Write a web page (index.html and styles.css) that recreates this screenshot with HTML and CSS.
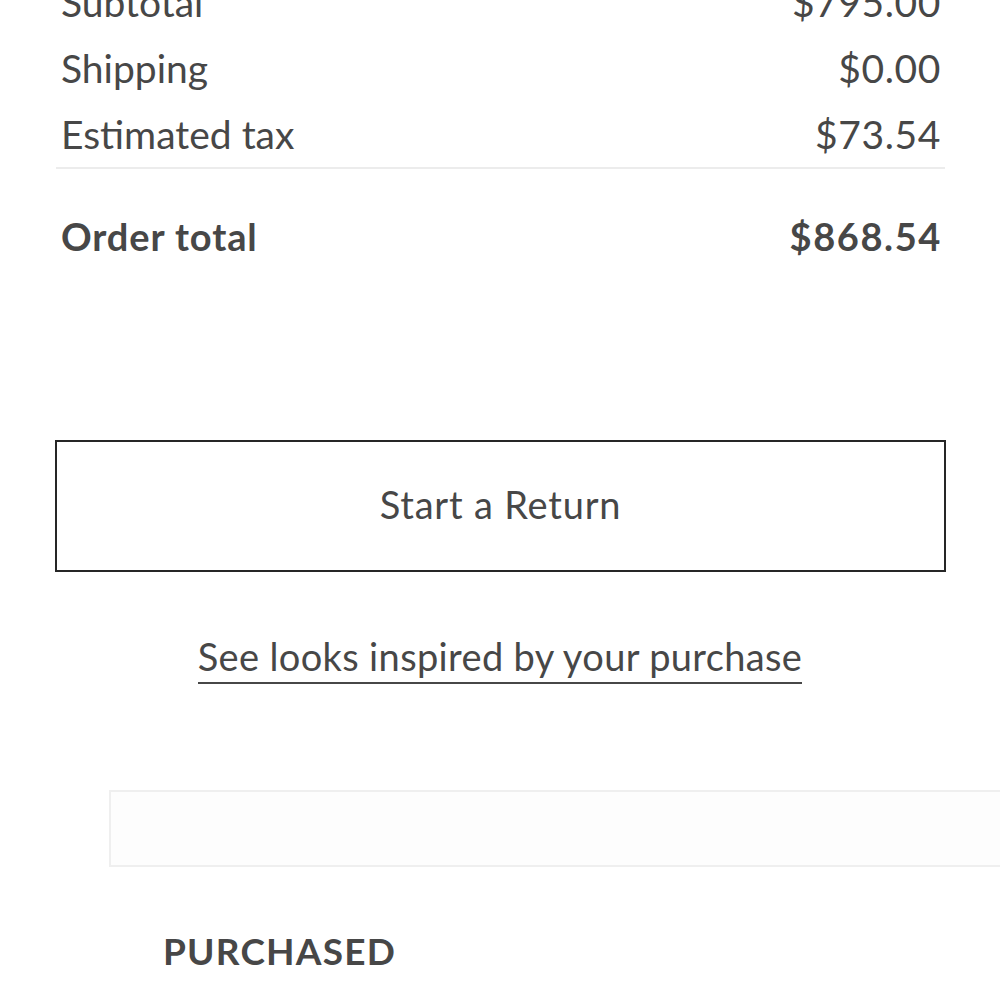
FILE: index.html
```html
<!DOCTYPE html>
<html lang="en">
<head>
<meta charset="utf-8">
<title>Order summary</title>
<link rel="stylesheet" href="styles.css">
</head>
<body>
<main class="page">
  <section class="summary">
    <div class="row"><span>Subtotal</span><span class="amt">$795.00</span></div>
    <div class="row"><span>Shipping</span><span class="amt">$0.00</span></div>
    <div class="row"><span>Estimated tax</span><span class="amt">$73.54</span></div>
    <div class="row total"><span>Order total</span><span class="amt">$868.54</span></div>
  </section>
  <button class="return-btn" type="button">Start a Return</button>
  <div class="looks"><a class="looks-link" href="#">See looks inspired by your purchase</a></div>
  <div class="panel"></div>
  <h2 class="purchased">PURCHASED</h2>
</main>
</body>
</html>
```
FILE: styles.css
```css
html, body {
  margin: 0;
  padding: 0;
  background: #ffffff;
}
body {
  font-family: Lato, "Open Sans", sans-serif;
  color: #474747;
  overflow: hidden;
}
.page {
  width: 1000px;
  margin-top: -31px;
}
.summary {
  margin-left: 56px;
  width: 889px;
}
.row {
  display: flex;
  justify-content: space-between;
  height: 66px;
  line-height: 66px;
  font-size: 39px;
  padding: 0 5px;
}
.amt {
  letter-spacing: 0.6px;
  margin-right: -1px;
}
.row.total {
  border-top: 2px solid #ececec;
  padding-top: 34px;
  font-weight: 700;
  font-size: 38px;
  letter-spacing: 0.9px;
}
.row.total .amt {
  letter-spacing: 1.6px;
  margin-right: -2px;
}
.return-btn {
  display: flex;
  align-items: center;
  justify-content: center;
  margin: 171px 0 0 55px;
  width: 891px;
  height: 132px;
  border: 2px solid #262626;
  background: #ffffff;
  font-family: Lato, "Open Sans", sans-serif;
  font-size: 38px;
  letter-spacing: 0.8px;
  color: #474747;
  padding: 0 0 4px 0;
}
.looks {
  display: flex;
  justify-content: center;
  margin-top: 61px;
}
.looks-link {
  font-size: 38px;
  letter-spacing: 0.35px;
  color: #474747;
  text-decoration: none;
  border-bottom: 2px solid #474747;
  line-height: 46px;
  padding-bottom: 3px;
}
.panel {
  margin: 106px 0 0 109px;
  height: 73px;
  border: 2px solid #efefef;
  border-right: none;
  background: #fdfdfd;
}
.purchased {
  margin: 61px 0 0 163px;
  font-size: 37px;
  font-weight: 700;
  letter-spacing: 1.2px;
  color: #474747;
  line-height: 46px;
}
```
